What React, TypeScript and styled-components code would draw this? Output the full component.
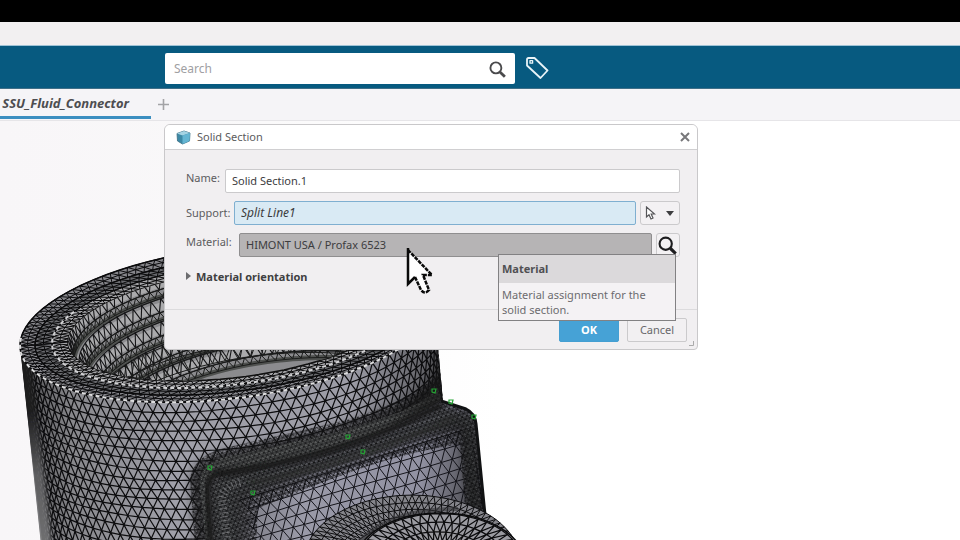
import React from "react";
import styled, { createGlobalStyle } from "styled-components";

const GlobalStyle = createGlobalStyle`
  *, *::before, *::after { box-sizing: border-box; }
  body { margin: 0; background: #fff; overflow: hidden; }
  body, button, input { font-family: "Noto Sans", "Open Sans", sans-serif; }
`;

const Page = styled.div`
  display: flex;
  flex-direction: column;
  height: 100vh;
  color: #5c5c5e;
  font-size: 11px;
`;

const TopStrip = styled.div`
  flex: none;
  height: 46px;
  border-top: 22px solid #000;
  border-bottom: 1px solid #9fc3d6;
  background: #f2f0f1;
`;

const Header = styled.header`
  flex: none;
  display: flex;
  align-items: center;
  gap: 10px;
  height: 43px;
  padding: 0 165px;
  background: #075a80;
  border-bottom: 1px solid #3f6f88;
`;

const SearchBox = styled.form`
  display: flex;
  align-items: center;
  flex: 0 1 350px;
  height: 31px;
  margin-top: 2px;
  padding: 2px 9px 0;
  border-radius: 2px;
  background: #fff;
`;

const SearchInput = styled.input`
  flex: 1;
  min-width: 0;
  padding: 0;
  border: 0;
  outline: 0;
  background: transparent;
  font-size: 12px;
  line-height: 20px;
  color: #555;
  &::placeholder { color: #a0a0a3; opacity: 1; }
`;

const IconButton = styled.button`
  display: flex;
  align-items: center;
  justify-content: center;
  flex: none;
  padding: 0;
  border: 0;
  background: transparent;
  color: #4a4a4c;
`;

const Tabs = styled.nav`
  flex: none;
  display: flex;
  height: 32px;
  background: #f5f4f7;
  border-bottom: 1px solid #e6e5e8;
`;

const Tab = styled.button`
  display: flex;
  align-items: center;
  justify-content: flex-end;
  width: 151px;
  height: 30px;
  padding: 0 22px 0 0;
  border: 0;
  border-bottom: 3px solid #3b8ec0;
  background: transparent;
  color: #4d4d50;
  font-size: 13px;
  font-weight: 700;
  font-style: italic;
  white-space: nowrap;
`;

const AddTab = styled(IconButton)`
  width: 24px;
  height: 30px;
  color: #a3a3a6;
`;

const Viewport = styled.main`
  position: relative;
  flex: 1;
  min-height: 0;
  overflow: hidden;
  background: linear-gradient(90deg, #f8f6f8 0, #f9f8f9 220px, #fff 500px);
`;

const ModelCanvas = styled.svg`
  position: absolute;
  left: 0;
  top: 0;
`;

const Dialog = styled.section`
  position: absolute;
  left: 164px;
  top: 3px;
  width: 534px;
  border: 1px solid #c9c8ca;
  border-radius: 6px 6px 4px 4px;
  background: #f1eff1;
`;

const TitleBar = styled.header`
  display: flex;
  align-items: center;
  gap: 6px;
  height: 25px;
  padding: 0 4px 0 11px;
  border-bottom: 1px solid #d0cfd1;
  border-radius: 5px 5px 0 0;
  background: #fff;
`;

const Title = styled.h1`
  flex: 1;
  margin: 0;
  font-size: 11px;
  line-height: 20px;
  font-weight: 400;
`;

const CloseButton = styled(IconButton)`
  width: 16px;
  height: 16px;
  color: #77777a;
`;

const Fields = styled.div`
  display: flex;
  flex-direction: column;
  gap: 8px;
  padding: 19px 17px 0 21px;
`;

const Row = styled.div`
  display: flex;
  height: 24px;
`;

const Label = styled.label<{ $width: number; $centered?: boolean }>`
  flex: none;
  width: ${(p) => p.$width}px;
  line-height: ${(p) => (p.$centered ? 24 : 18)}px;
  white-space: nowrap;
`;

const tones = {
  plain: "background:#fff;border-color:#cbcacc;color:#3c3c3e;",
  active: "background:#d9eaf4;border-color:#7fafd0;color:#3c3c3e;font-style:italic;",
  hover: "background:#b6b4b5;border-color:#8f8e8f;color:#3c3c3e;",
};

const Field = styled.input<{ $tone: keyof typeof tones }>`
  flex: 1;
  min-width: 0;
  height: 24px;
  padding: 0 6px 1px;
  border: 1px solid;
  border-radius: 2px;
  outline: 0;
  font-size: ${(p) => (p.$tone === "active" ? 12 : 11)}px;
  ${(p) => tones[p.$tone]}
`;

const ToolButton = styled(IconButton)<{ $width: number }>`
  gap: 10px;
  width: ${(p) => p.$width}px;
  height: 24px;
  margin-left: 4px;
  padding-right: 2px;
  border: 1px solid #cbcacc;
  border-radius: 3px;
  background: #f3f1f3;
  color: #1d1d1f;
`;

const Expander = styled.button`
  display: flex;
  align-items: center;
  align-self: flex-start;
  gap: 5px;
  height: 22px;
  padding: 0;
  border: 0;
  background: transparent;
  color: #3f3f41;
  font-size: 11px;
  font-weight: 700;
`;

const Actions = styled.footer`
  display: flex;
  justify-content: flex-end;
  gap: 8px;
  height: 40px;
  margin-top: 22px;
  padding: 8px 10px 0;
  border-top: 1px solid #dcdbdd;
`;

const ActionButton = styled.button<{ $primary?: boolean }>`
  width: 60px;
  height: 24px;
  padding: 0 0 1px;
  border: 1px solid ${(p) => (p.$primary ? "#459fd2" : "#cbcacc")};
  border-radius: 2px;
  background: ${(p) => (p.$primary ? "#46a2d6" : "#f2f0f2")};
  color: ${(p) => (p.$primary ? "#fff" : "#68686b")};
  font-size: 11px;
  font-weight: ${(p) => (p.$primary ? 700 : 400)};
`;

const Grip = styled.svg`
  position: absolute;
  right: 3px;
  bottom: 3px;
`;

const Tooltip = styled.div`
  position: absolute;
  left: 333px;
  top: 129px;
  width: 178px;
  border: 1px solid #828183;
  background: #f4f2f4;
`;

const TooltipTitle = styled.div`
  padding: 4px 3px;
  background: #dbd9db;
  color: #505053;
  font-weight: 700;
  line-height: 20px;
`;

const TooltipText = styled.p`
  margin: 0;
  padding: 4px 3px 3px;
  color: #6c6c6f;
  line-height: 15px;
`;

const Pointer = styled.svg`
  position: absolute;
  left: 240px;
  top: 121px;
  pointer-events: none;
`;

type Pt = [number, number];
type Surface = (u: number, v: number) => Pt;

/* Triangle mesh over a parametric surface, odd rows shifted by half a cell. */
function mesh(s: Surface, cols: number, rows: number): string {
  const at = (i: number, j: number) => {
    const u = Math.min(1, Math.max(0, (i + (j % 2 ? 0.5 : 0)) / cols));
    const wob = Math.sin(i * 12.9 + j * 7.3) * 0.07;
    const [x, y] = s(u, j === 0 || j === rows ? j / rows : (j + wob) / rows);
    return `${x.toFixed(1)} ${y.toFixed(1)}`;
  };
  let d = "";
  for (let j = 0; j <= rows; j++) {
    d += "M" + at(0, j);
    for (let i = 1; i <= cols; i++) d += "L" + at(i, j);
    if (j === rows) break;
    d += "M" + at(0, j);
    for (let i = 0; i <= cols; i++) {
      d += j % 2 ? "L" + at(i, j) + "L" + at(i + 1, j + 1) : "L" + at(i, j) + "L" + at(i, j + 1);
    }
  }
  return d;
}

/* Tilted ellipse used for every ring of the connector. */
const ring = (cx: number, cy: number, rx: number, ry: number, a: number): Pt => {
  const x = -rx * Math.cos(a);
  return [cx + x, cy - 0.108 * x + ry * Math.sin(a)];
};
type Ring = [number, number, number, number];
const between = (p: Ring, q: Ring, from = 0, to = Math.PI * 2): Surface => (u, v) => {
  const m = p.map((n, k) => n + (q[k] - n) * v) as Ring;
  return ring(m[0], m[1], m[2], m[3], from + (to - from) * u);
};
const outline = (r: Ring, from = 0, to = Math.PI * 2) => {
  let d = "";
  for (let i = 0; i <= 80; i++) {
    const [x, y] = ring(...r, from + ((to - from) * i) / 80);
    d += (i ? "L" : "M") + x.toFixed(1) + " " + y.toFixed(1);
  }
  return d;
};

const rim: Ring = [229, 323, 209, 76];
const rimIn: Ring = [231, 324, 196, 68];
const lip: Ring = [232, 324, 180, 61];
const bore: Ring = [233, 324, 165, 54];

const wall: Surface = (u, v) => {
  const [x, y] = ring(...rim, Math.PI * u);
  return [x + v * 24, y + v * 205];
};
const bodyShape = outline(rim, Math.PI, Math.PI * 2) + "L434 302L456 545L41 545L20 346Z";

const mix = (a: number, b: number, t: number) => a + (b - a) * t;
const plate: Surface = (u, v) => [mix(mix(240, 470, u), mix(268, 492, u), v), mix(mix(500, 428, u), mix(610, 560, u), v)];
const flange: Surface = (u, v) => {
  const a = Math.PI * u;
  const r = mix(108, 66, v);
  return [412 - r * Math.cos(a), 561 - r * 0.61 * Math.sin(a) + 3 * v];
};
const nozzle: Surface = (u, v) => {
  const a = Math.PI * u;
  const r = mix(82, 36, v);
  return [440 - r * Math.cos(a), 562 - r * 0.59 * Math.sin(a)];
};

const fillet = "M438 388C420 408 380 420 330 434L222 458Q198 466 200 488L206 545L310 545L460 500L462 405L441 399Z";
const plateShape = "M213 545L209 492Q208 477 224 472C300 462 370 444 441 401L466 409Q475 413 476 424L488 545Z";
const markers: Pt[] = [[210, 468], [253, 493], [348, 437], [363, 452], [434, 391], [451, 402], [474, 417]];

function Connector() {
  return (
    <ModelCanvas width="520" height="420" viewBox="0 121 520 420" aria-label="Meshed fluid connector" role="img">
      <defs>
        <linearGradient id="body" x1="20" x2="460" y1="0" y2="0" gradientUnits="userSpaceOnUse">
          <stop offset="0" stopColor="#4c4c4e" />
          <stop offset=".12" stopColor="#88888c" />
          <stop offset=".35" stopColor="#a0a0a9" />
          <stop offset=".75" stopColor="#9c9ca6" />
          <stop offset="1" stopColor="#4a4a4d" />
        </linearGradient>
        <linearGradient id="face" x1="230" y1="480" x2="480" y2="500" gradientUnits="userSpaceOnUse">
          <stop offset="0" stopColor="#77777e" />
          <stop offset=".3" stopColor="#9a9aa8" />
          <stop offset=".75" stopColor="#9292a3" />
          <stop offset="1" stopColor="#48484c" />
        </linearGradient>
        <linearGradient id="haze" x1="0" y1="410" x2="0" y2="540" gradientUnits="userSpaceOnUse">
          <stop offset="0" stopColor="#202022" />
          <stop offset=".5" stopColor="#727274" />
          <stop offset="1" stopColor="#88888a" />
        </linearGradient>
        <pattern id="fine" width="5" height="6" patternUnits="userSpaceOnUse" patternTransform="rotate(-17)">
          <path d="M0 0H5M0 3H5M0 0L2.5 3L5 0M0 6L2.5 3L5 6" fill="none" stroke="#0b0b0c" strokeWidth="0.9" />
        </pattern>
        <filter id="soft" x="-20%" y="-20%" width="140%" height="140%"><feGaussianBlur stdDeviation="5" /></filter>
        <filter id="soften" x="-20%" y="-20%" width="140%" height="140%"><feGaussianBlur stdDeviation="2" /></filter>
        <clipPath id="bodyClip"><path d={bodyShape} /></clipPath>
        <clipPath id="boreClip"><path d={outline(bore)} /></clipPath>
        <clipPath id="plateClip"><path d={plateShape} /></clipPath>
      </defs>

      <g clipPath="url(#bodyClip)">
        <path d={bodyShape} fill="url(#body)" />
        <path d={mesh(wall, 54, 21)} fill="none" stroke="#0c0c0e" strokeWidth="1.2" />
        <path d="M16 345L32 365L52 545L34 545Z" fill="url(#haze)" opacity=".8" filter="url(#soften)" />
      </g>

      <path d={outline(rim)} fill="#85858a" stroke="#0a0a0b" strokeWidth="1.5" />
      <path d={mesh(between(rim, rimIn), 130, 2)} fill="none" stroke="#0b0b0d" strokeWidth="1" />
      <path d={outline(rimIn)} fill="#68696d" stroke="#161618" strokeWidth="1.5" />
      <path d={mesh(between(rimIn, lip), 110, 2)} fill="none" stroke="#09090a" strokeWidth="1" />
      <path d={outline(lip)} fill="#a4a4a7" stroke="#111" strokeWidth="1" />
      <path d={mesh(between(lip, bore), 110, 2)} fill="none" stroke="#09090a" strokeWidth="1" />
      <path d={outline(rim, -0.1, Math.PI * 0.95)} fill="none" stroke="#dededf" strokeWidth="2" strokeDasharray="4 3" />
      <path d={outline(lip, -0.5, Math.PI * 0.8)} fill="none" stroke="#d2d2d4" strokeWidth="2" strokeDasharray="4 3" />
      <path d={outline(bore)} fill="#8b8b8e" stroke="#111" strokeWidth="1.5" />
      <g clipPath="url(#boreClip)">
        {[-1, 0, 1, 2, 3, 4].map((k) => {
          const a: Ring = [240 + k * 9, 322 + k * 20, 172 - k * 2, 62];
          const b: Ring = [242 + k * 9, 335 + k * 20, 169 - k * 2, 62];
          const c: Ring = [244 + k * 9, 342 + k * 20, 170 - k * 2, 62];
          return (
            <g key={k} fill="none">
              <path d={outline([a[0], a[1] + 8, a[2], a[3]], -Math.PI, 0)} stroke="#aaaaac" strokeWidth="8" />
              <path d={outline(c, -Math.PI, 0)} stroke="#4f514f" strokeWidth="5" />
              <path d={mesh(between(a, b, -Math.PI, 0), 46, 1)} stroke="#151517" strokeWidth="1.1" />
              <path d={mesh(between(b, c, -Math.PI, 0), 60, 1)} stroke="#1b1c1b" strokeWidth="1" />
            </g>
          );
        })}
        <path d={mesh(between([262, 385, 168, 60], [264, 415, 166, 60], -Math.PI, 0), 40, 2)} fill="none" stroke="#1b1c1b" strokeWidth="1" />
      </g>

      <g clipPath="url(#bodyClip)">
        <path d="M204 545L198 485Q197 468 220 461L330 436Q400 420 440 384" fill="none" stroke="#222423" strokeOpacity=".75" strokeWidth="14" filter="url(#soft)" />
        <path d={fillet} fill="#5c5e5e" />
        <path d="M195 545L190 480Q192 458 220 449L330 424Q400 408 445 370V480H230V545Z" fill="url(#fine)" opacity=".9" />
        <path d="M448 335L449 410L390 425Q432 400 438 350Z" fill="#151617" opacity=".6" filter="url(#soft)" />
      </g>

      <path d={plateShape} fill="url(#face)" />
      <g clipPath="url(#plateClip)">
        <path d={mesh(plate, 21, 11)} fill="none" stroke="#14141a" strokeWidth="1" />
        <path d="M214 545L211 492Q212 480 225 475C310 466 380 443 441 407L474 418L482 545H470L462 426C390 440 320 468 240 496L240 545Z" fill="#4c4e4e" opacity=".7" filter="url(#soften)" />
        <path d="M213 545L209 470L441 399L480 410L488 545H468L460 444C380 456 320 484 258 508L256 545Z" fill="url(#fine)" />
        <path d="M228 545L222 500Q222 486 243 482" fill="none" stroke="#b0b0b4" strokeWidth="8" strokeDasharray="1 3" opacity=".4" />
        <path d="M245 545L242 497Q320 468 462 424L480 545" fill="none" stroke="#171818" strokeWidth="8" opacity=".5" filter="url(#soft)" />
      </g>
      <path d="M218 474C305 462 370 444 442 404" fill="none" stroke="#151716" strokeWidth="7" filter="url(#soften)" />
      <path d="M250 482Q350 467 455 417" fill="none" stroke="#292b29" strokeWidth="4" opacity=".9" filter="url(#soften)" />
      <path d="M211 545L208 491Q207 477 220 472" fill="none" stroke="#151716" strokeWidth="6" filter="url(#soften)" />
      <path d="M441 401L466 409Q475 413 476 424L488 545" fill="none" stroke="#111213" strokeWidth="3" />

      <path d={mesh(flange, 46, 4)} fill="#85858b" stroke="#0d0d0f" strokeWidth="1" />
      <path d="M356 545Q388 508 458 509" fill="none" stroke="#303133" strokeWidth="4" opacity=".6" />
      <path d="M356 562A84 49 0 0 1 524 562Z" fill="#9c9ca2" stroke="#0b0b0c" strokeWidth="1.5" />
      <path d={mesh(nozzle, 26, 3)} fill="none" stroke="#0b0b0d" strokeWidth="1.2" />
      {markers.map(([x, y]) => (
        <path key={x} d={`M${x - 2} ${y - 2}l4 0l-1 4l-3-1z`} fill="none" stroke="#27a536" strokeWidth="1.2" />
      ))}
    </ModelCanvas>
  );
}

const Magnifier = ({ size, weight }: { size: number; weight: number }) => (
  <svg width={size} height={size} viewBox="0 0 18 18" fill="none" stroke="currentColor" aria-hidden="true">
    <circle cx="7.3" cy="7.3" r="5.8" strokeWidth={weight} />
    <path d="M11.6 11.6L16.8 16.6" strokeWidth={weight + 1} />
  </svg>
);

export default function App() {
  return (
    <>
      <GlobalStyle />
      <Page>
        <TopStrip />
        <Header>
          <SearchBox role="search" onSubmit={(e) => e.preventDefault()}>
            <SearchInput type="search" placeholder="Search" aria-label="Search" />
            <IconButton type="submit" aria-label="Run search">
              <Magnifier size={17} weight={2} />
            </IconButton>
          </SearchBox>
          <IconButton type="button" aria-label="Tags">
            <svg width="24" height="24" viewBox="0 0 24 24" fill="none" stroke="#e9f4f8" strokeWidth="1.8" strokeLinejoin="round">
              <path d="M2 4.5Q2 3 3.5 3H9.5L22.5 15.5L15.5 23L2 10.5Z" />
              <rect x="5" y="5.6" width="2.6" height="2.6" strokeWidth="1.3" />
            </svg>
          </IconButton>
        </Header>
        <Tabs>
          <Tab type="button">SSU_Fluid_Connector</Tab>
          <AddTab type="button" aria-label="New tab">
            <svg width="11" height="11" viewBox="0 0 11 11" stroke="currentColor" strokeWidth="1.6"><path d="M5.5 0V11M0 5.5H11" /></svg>
          </AddTab>
        </Tabs>
        <Viewport>
          <Connector />
          <Dialog role="dialog" aria-labelledby="dialog-title">
            <TitleBar>
              <svg width="15" height="15" viewBox="0 0 15 15" aria-hidden="true">
                <path d="M1 3.5L8 1L14 3L13.5 11L6.5 14L1.5 11Z" fill="#3d89a6" stroke="#376b80" strokeWidth="0.8" />
                <path d="M1 3.5L8 1L14 3L6.5 5.5Z" fill="#a5d3e3" />
                <path d="M6.5 5.5L14 3L13.5 11L6.5 14Z" fill="#65b5d2" />
              </svg>
              <Title id="dialog-title">Solid Section</Title>
              <CloseButton type="button" aria-label="Close">
                <svg width="10" height="10" viewBox="0 0 10 10" stroke="currentColor" strokeWidth="2"><path d="M1 1L9 9M9 1L1 9" /></svg>
              </CloseButton>
            </TitleBar>
            <Fields>
              <Row>
                <Label htmlFor="name" $width={39}>Name:</Label>
                <Field id="name" $tone="plain" defaultValue="Solid Section.1" />
              </Row>
              <Row>
                <Label htmlFor="support" $width={48} $centered>Support:</Label>
                <Field id="support" $tone="active" defaultValue="Split Line1" />
                <ToolButton type="button" $width={40} aria-label="Selection mode">
                  <svg width="11" height="14" viewBox="0 0 11 14" fill="#fff" stroke="#555558" strokeWidth="1.2"><path d="M1.5 1V11L4 8.8L6 13L8 12L6.2 8H9.6Z" /></svg>
                  <svg width="8" height="5" viewBox="0 0 8 5" fill="#3e3e40"><path d="M0 0H8L4 5Z" /></svg>
                </ToolButton>
              </Row>
              <Row>
                <Label htmlFor="material" $width={53}>Material:</Label>
                <Field id="material" $tone="hover" readOnly value="HIMONT USA / Profax 6523" />
                <ToolButton type="button" $width={24} aria-label="Find material">
                  <Magnifier size={19} weight={2} />
                </ToolButton>
              </Row>
              <Expander type="button" aria-expanded="false">
                <svg width="5" height="8" viewBox="0 0 5 8" fill="#6c6c6f"><path d="M0 0L5 4L0 8Z" /></svg>
                Material orientation
              </Expander>
            </Fields>
            <Actions>
              <ActionButton type="button" $primary>OK</ActionButton>
              <ActionButton type="button">Cancel</ActionButton>
            </Actions>
            <Grip width="5" height="5" viewBox="0 0 5 5" fill="none" stroke="#aaa"><path d="M4.5 0V4.5H0" /></Grip>
            <Tooltip role="tooltip">
              <TooltipTitle>Material</TooltipTitle>
              <TooltipText>Material assignment for the solid section.</TooltipText>
            </Tooltip>
            <Pointer width="30" height="50" viewBox="0 0 30 50" aria-hidden="true">
              <path d="M3 3V38L10 31L16 44Q20 49 24 44L18 29H27Z" fill="#fff" />
              <path d="M3 2V38L10 31" fill="none" stroke="#0a0a0a" strokeWidth="2.5" />
              <path d="M10 31L16 44Q20 49 24 44L18 29H27L3 4" fill="none" stroke="#0a0a0a" strokeWidth="2.5" strokeDasharray="4 1" />
            </Pointer>
          </Dialog>
        </Viewport>
      </Page>
    </>
  );
}
